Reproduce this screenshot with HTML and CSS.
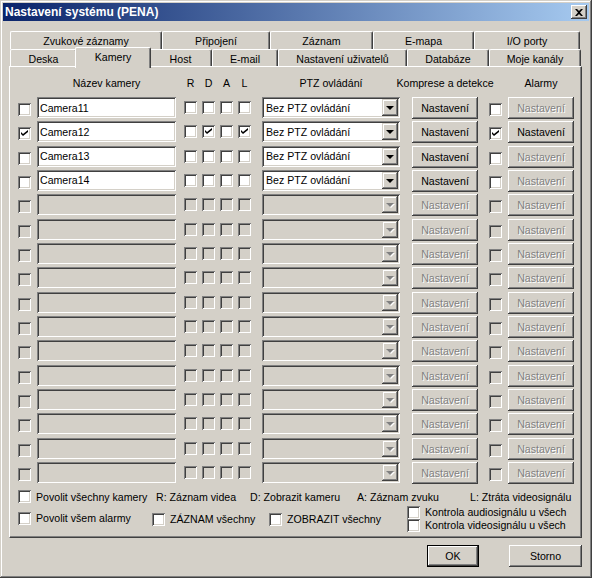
FILE: index.html
```html
<!DOCTYPE html>
<html lang="cs">
<head>
  <meta charset="UTF-8" />
  <title>Nastavení systému (PENA)</title>
  <link rel="stylesheet" href="styles.css">
</head>
<body>

<div class="window">
  <div class="titlebar">
    <span class="title">Nastavení systému (PENA)</span>
    <span class="close"><svg width="8" height="7" viewBox="0 0 8 7"><path d="M0 0h2l2 2 2-2h2L5 3.5 8 7H6L4 5 2 7H0l3-3.5z" fill="#000"/></svg></span>
  </div>

  <div class="tabs">
    <div class="tabrow back">
      <div class="tab" style="width:152px">Zvukové záznamy</div>
      <div class="tab" style="width:108px">Připojení</div>
      <div class="tab" style="width:103px">Záznam</div>
      <div class="tab" style="width:101px">E-mapa</div>
      <div class="tab" style="width:106px">I/O porty</div>
    </div>
    <div class="tabrow front">
      <div class="tab" style="width:67px">Deska</div>
      <div class="tab active" style="width:76px">Kamery</div>
      <div class="tab" style="width:63px">Host</div>
      <div class="tab" style="width:66px">E-mail</div>
      <div class="tab" style="width:129px">Nastavení uživatelů</div>
      <div class="tab" style="width:82px">Databáze</div>
      <div class="tab" style="width:92px">Moje kanály</div>
    </div>
  </div>

  <div class="panel">
    <div class="head">
      <span class="h-name">Název kamery</span>
      <span class="h-flag first">R</span>
      <span class="h-flag">D</span>
      <span class="h-flag">A</span>
      <span class="h-flag">L</span>
      <span class="h-ptz">PTZ ovládání</span>
      <span class="h-btn">Komprese a detekce</span>
      <span class="h-alarm">Alarmy</span>
    </div>

    <div class="rows">
      <div class="row">
        <span class="cb"></span>
        <input class="name" type="text" value="Camera11">
        <span class="cb flag first"></span><span class="cb flag"></span><span class="cb flag"></span><span class="cb flag"></span>
        <div class="combo"><span>Bez PTZ ovládání</span><i class="drop"></i></div>
        <button class="btn setup">Nastavení</button>
        <span class="cb alarm"></span>
        <button class="btn setup second" disabled>Nastavení</button>
      </div>
      <div class="row">
        <span class="cb on"><svg width="7" height="7" viewBox="0 0 7 7"><path d="M0 2l2 2 5-4v2L2 6 0 4z"/></svg></span>
        <input class="name" type="text" value="Camera12">
        <span class="cb flag first"></span><span class="cb flag on"><svg width="7" height="7" viewBox="0 0 7 7"><path d="M0 2l2 2 5-4v2L2 6 0 4z"/></svg></span><span class="cb flag"></span><span class="cb flag on"><svg width="7" height="7" viewBox="0 0 7 7"><path d="M0 2l2 2 5-4v2L2 6 0 4z"/></svg></span>
        <div class="combo"><span>Bez PTZ ovládání</span><i class="drop"></i></div>
        <button class="btn setup">Nastavení</button>
        <span class="cb alarm on"><svg width="7" height="7" viewBox="0 0 7 7"><path d="M0 2l2 2 5-4v2L2 6 0 4z"/></svg></span>
        <button class="btn setup second">Nastavení</button>
      </div>
      <div class="row">
        <span class="cb"></span>
        <input class="name" type="text" value="Camera13">
        <span class="cb flag first"></span><span class="cb flag"></span><span class="cb flag"></span><span class="cb flag"></span>
        <div class="combo"><span>Bez PTZ ovládání</span><i class="drop"></i></div>
        <button class="btn setup">Nastavení</button>
        <span class="cb alarm"></span>
        <button class="btn setup second" disabled>Nastavení</button>
      </div>
      <div class="row">
        <span class="cb"></span>
        <input class="name" type="text" value="Camera14">
        <span class="cb flag first"></span><span class="cb flag"></span><span class="cb flag"></span><span class="cb flag"></span>
        <div class="combo"><span>Bez PTZ ovládání</span><i class="drop"></i></div>
        <button class="btn setup">Nastavení</button>
        <span class="cb alarm"></span>
        <button class="btn setup second" disabled>Nastavení</button>
      </div>
      <!-- prázdné řádky -->
      <div class="row off"><span class="cb"></span><input class="name" type="text" disabled><span class="cb flag first"></span><span class="cb flag"></span><span class="cb flag"></span><span class="cb flag"></span><div class="combo"><span></span><i class="drop"></i></div><button class="btn setup" disabled>Nastavení</button><span class="cb alarm"></span><button class="btn setup second" disabled>Nastavení</button></div>
      <div class="row off"><span class="cb"></span><input class="name" type="text" disabled><span class="cb flag first"></span><span class="cb flag"></span><span class="cb flag"></span><span class="cb flag"></span><div class="combo"><span></span><i class="drop"></i></div><button class="btn setup" disabled>Nastavení</button><span class="cb alarm"></span><button class="btn setup second" disabled>Nastavení</button></div>
      <div class="row off"><span class="cb"></span><input class="name" type="text" disabled><span class="cb flag first"></span><span class="cb flag"></span><span class="cb flag"></span><span class="cb flag"></span><div class="combo"><span></span><i class="drop"></i></div><button class="btn setup" disabled>Nastavení</button><span class="cb alarm"></span><button class="btn setup second" disabled>Nastavení</button></div>
      <div class="row off"><span class="cb"></span><input class="name" type="text" disabled><span class="cb flag first"></span><span class="cb flag"></span><span class="cb flag"></span><span class="cb flag"></span><div class="combo"><span></span><i class="drop"></i></div><button class="btn setup" disabled>Nastavení</button><span class="cb alarm"></span><button class="btn setup second" disabled>Nastavení</button></div>
      <div class="row off"><span class="cb"></span><input class="name" type="text" disabled><span class="cb flag first"></span><span class="cb flag"></span><span class="cb flag"></span><span class="cb flag"></span><div class="combo"><span></span><i class="drop"></i></div><button class="btn setup" disabled>Nastavení</button><span class="cb alarm"></span><button class="btn setup second" disabled>Nastavení</button></div>
      <div class="row off"><span class="cb"></span><input class="name" type="text" disabled><span class="cb flag first"></span><span class="cb flag"></span><span class="cb flag"></span><span class="cb flag"></span><div class="combo"><span></span><i class="drop"></i></div><button class="btn setup" disabled>Nastavení</button><span class="cb alarm"></span><button class="btn setup second" disabled>Nastavení</button></div>
      <div class="row off"><span class="cb"></span><input class="name" type="text" disabled><span class="cb flag first"></span><span class="cb flag"></span><span class="cb flag"></span><span class="cb flag"></span><div class="combo"><span></span><i class="drop"></i></div><button class="btn setup" disabled>Nastavení</button><span class="cb alarm"></span><button class="btn setup second" disabled>Nastavení</button></div>
      <div class="row off"><span class="cb"></span><input class="name" type="text" disabled><span class="cb flag first"></span><span class="cb flag"></span><span class="cb flag"></span><span class="cb flag"></span><div class="combo"><span></span><i class="drop"></i></div><button class="btn setup" disabled>Nastavení</button><span class="cb alarm"></span><button class="btn setup second" disabled>Nastavení</button></div>
      <div class="row off"><span class="cb"></span><input class="name" type="text" disabled><span class="cb flag first"></span><span class="cb flag"></span><span class="cb flag"></span><span class="cb flag"></span><div class="combo"><span></span><i class="drop"></i></div><button class="btn setup" disabled>Nastavení</button><span class="cb alarm"></span><button class="btn setup second" disabled>Nastavení</button></div>
      <div class="row off"><span class="cb"></span><input class="name" type="text" disabled><span class="cb flag first"></span><span class="cb flag"></span><span class="cb flag"></span><span class="cb flag"></span><div class="combo"><span></span><i class="drop"></i></div><button class="btn setup" disabled>Nastavení</button><span class="cb alarm"></span><button class="btn setup second" disabled>Nastavení</button></div>
      <div class="row off"><span class="cb"></span><input class="name" type="text" disabled><span class="cb flag first"></span><span class="cb flag"></span><span class="cb flag"></span><span class="cb flag"></span><div class="combo"><span></span><i class="drop"></i></div><button class="btn setup" disabled>Nastavení</button><span class="cb alarm"></span><button class="btn setup second" disabled>Nastavení</button></div>
      <div class="row off"><span class="cb"></span><input class="name" type="text" disabled><span class="cb flag first"></span><span class="cb flag"></span><span class="cb flag"></span><span class="cb flag"></span><div class="combo"><span></span><i class="drop"></i></div><button class="btn setup" disabled>Nastavení</button><span class="cb alarm"></span><button class="btn setup second" disabled>Nastavení</button></div>
    </div>

    <div class="opts">
      <div class="line">
        <label class="opt all-cams"><span class="cb"></span>Povolit všechny kamery</label>
        <span class="leg leg-r">R: Záznam videa</span>
        <span class="leg leg-d">D: Zobrazit kameru</span>
        <span class="leg leg-a">A: Záznam zvuku</span>
        <span class="leg">L: Ztráta videosignálu</span>
      </div>
      <div class="line two">
        <label class="opt all-alarms"><span class="cb"></span>Povolit všem alarmy</label>
        <label class="opt all-rec"><span class="cb"></span>ZÁZNAM všechny</label>
        <label class="opt all-show"><span class="cb"></span>ZOBRAZIT všechny</label>
        <div class="checks">
          <label class="opt"><span class="cb"></span>Kontrola audiosignálu u všech</label>
          <label class="opt"><span class="cb"></span>Kontrola videosignálu u všech</label>
        </div>
      </div>
    </div>
  </div>

  <div class="actions">
    <button class="btn ok">OK</button>
    <button class="btn cancel">Storno</button>
  </div>
</div>

</body>
</html>
```

FILE: styles.css
```css
body { margin: 0; background: #d4d0c8; font-family: "Liberation Sans", Arial, sans-serif; font-size: 10.6px; color: #000; }

/* okno */
.window { width: 592px; height: 578px; box-sizing: border-box; padding-top: 3px; background: #d4d0c8;
  box-shadow: inset -1px -1px #404040, inset 1px 1px #d4d0c8, inset -2px -2px #808080, inset 2px 2px #fff; }
.titlebar { display: flex; align-items: center; height: 18px; margin: 0 3px; padding-left: 2px;
  background: linear-gradient(90deg, #0a246a, #a6caf0); }
.title { color: #fff; font-weight: bold; font-size: 12px; }
.close { margin-left: auto; margin-right: 2px; width: 16px; height: 14px; box-sizing: border-box; display: flex; align-items: center; justify-content: center;
  background: #d4d0c8; box-shadow: inset -1px -1px #404040, inset 1px 1px #fff, inset -2px -2px #808080; }

/* záložky */
.tabs { margin-top: 10px; padding-left: 10px; }
.tabrow { display: flex; height: 18px; }
.tabrow.front { height: 17px; }
.tab { box-sizing: border-box; height: 100%; padding-top: 2px; line-height: 14px; text-align: center; white-space: nowrap;
  border-top: 1px solid #fff; border-left: 1px solid #fff; border-right: 1px solid #404040; border-radius: 2px 2px 0 0;
  box-shadow: inset -1px 0 #808080; background: #d4d0c8; }
.tab.active { position: relative; z-index: 1; height: 21px; margin: -2px -2px 0; }

.panel { width: 573px; height: 472px; margin-left: 9px; box-sizing: border-box;
  border-top: 1px solid #fff; border-left: 1px solid #fff; border-right: 1px solid #404040; border-bottom: 1px solid #404040;
  box-shadow: inset -1px -1px #808080; }

/* hlavička sloupců */
.head { display: flex; height: 28px; padding: 2px 0 0 8px; line-height: 28px; white-space: nowrap; }
.head > span { display: flex; justify-content: center; }
.h-name { width: 139px; margin-left: 19px; }
.h-flag { width: 13px; margin-left: 5px; }
.h-flag.first { margin-left: 8px; }
.h-ptz { width: 138px; margin-left: 11px; }
.h-btn { width: 66px; margin-left: 12px; }
.h-alarm { width: 66px; margin-left: 30px; }

/* řádky kamer */
.rows { display: flex; flex-direction: column; gap: 2.33px; padding-left: 8px; }
.row { display: flex; align-items: flex-start; height: 22px; }
.row > .cb { margin-top: 6px; }
.row > .cb.flag { margin-top: 4px; margin-left: 5px; }
.row > .cb.flag.first { margin-left: 8px; }
.row > .cb.alarm { margin-left: 11px; }

.cb { width: 13px; height: 13px; flex: none; box-sizing: border-box; display: flex; align-items: center; justify-content: center; background: #fff;
  box-shadow: inset 1px 1px #808080, inset -1px -1px #fff, inset 2px 2px #404040, inset -2px -2px #d4d0c8; }
.cb svg { fill: #000; }
.row.off .cb { background: #d4d0c8; }

.name { width: 139px; height: 21px; margin: 0 0 0 6px; padding: 0 2px 0 3px; box-sizing: border-box; border: 0; outline: none;
  font: inherit; color: #000; background: #fff;
  box-shadow: inset 1px 1px #808080, inset -1px -1px #fff, inset 2px 2px #404040, inset -2px -2px #d4d0c8; }
.name:disabled { background: #d4d0c8; }

.combo { display: flex; align-items: center; width: 138px; height: 21px; margin-left: 11px; padding: 2px 2px 2px 4px; box-sizing: border-box; background: #fff;
  box-shadow: inset 1px 1px #808080, inset -1px -1px #fff, inset 2px 2px #404040, inset -2px -2px #d4d0c8; }
.drop { margin-left: auto; width: 16px; height: 17px; display: flex; align-items: center; justify-content: center; background: #d4d0c8;
  box-shadow: inset -1px -1px #404040, inset 1px 1px #d4d0c8, inset -2px -2px #808080, inset 2px 2px #fff; }
.drop::after { content: ""; border-top: 4px solid #000; border-left: 4px solid transparent; border-right: 4px solid transparent; margin-top: 1px; }
.row.off .combo { background: #d4d0c8; }
.row.off .drop::after { border-top-color: #808080; filter: drop-shadow(1px 1px 0 #fff); }

.btn { display: flex; align-items: center; justify-content: center; padding: 0; border: 0; font: inherit; color: #000; background: #d4d0c8;
  box-shadow: inset -1px -1px #404040, inset 1px 1px #fff, inset -2px -2px #808080, inset 2px 2px #d4d0c8; }
.btn:disabled { color: #808080; text-shadow: 1px 1px 0 #fff; }
.btn.setup { width: 66px; height: 22px; margin-left: 12px; }
.btn.setup.second { margin-left: 6px; }

/* volby dole */
.opts { margin-top: 6px; padding-left: 8px; white-space: nowrap; }
.line { display: flex; align-items: center; height: 14px; }
.line.two { align-items: flex-start; height: 27px; margin-top: 1px; }
.opt { display: flex; align-items: center; gap: 5px; height: 13px; }
.all-cams { width: 138px; }
.leg-r { width: 94px; }
.leg-d { width: 107px; }
.leg-a { width: 113px; }
.all-alarms { width: 134px; margin-top: 7px; }
.all-rec { width: 117px; margin-top: 8px; }
.all-show { width: 138px; margin-top: 8px; }
.checks { margin-top: 1px; display: flex; flex-direction: column; }

.actions { display: flex; justify-content: flex-end; gap: 30px; margin: 7px 10px 0 0; }
.btn.ok { width: 52px; height: 22px;
  box-shadow: inset 0 0 0 1px #000, inset -2px -2px #404040, inset 2px 2px #fff, inset -3px -3px #808080; }
.btn.cancel { width: 73px; height: 22px; }
```
